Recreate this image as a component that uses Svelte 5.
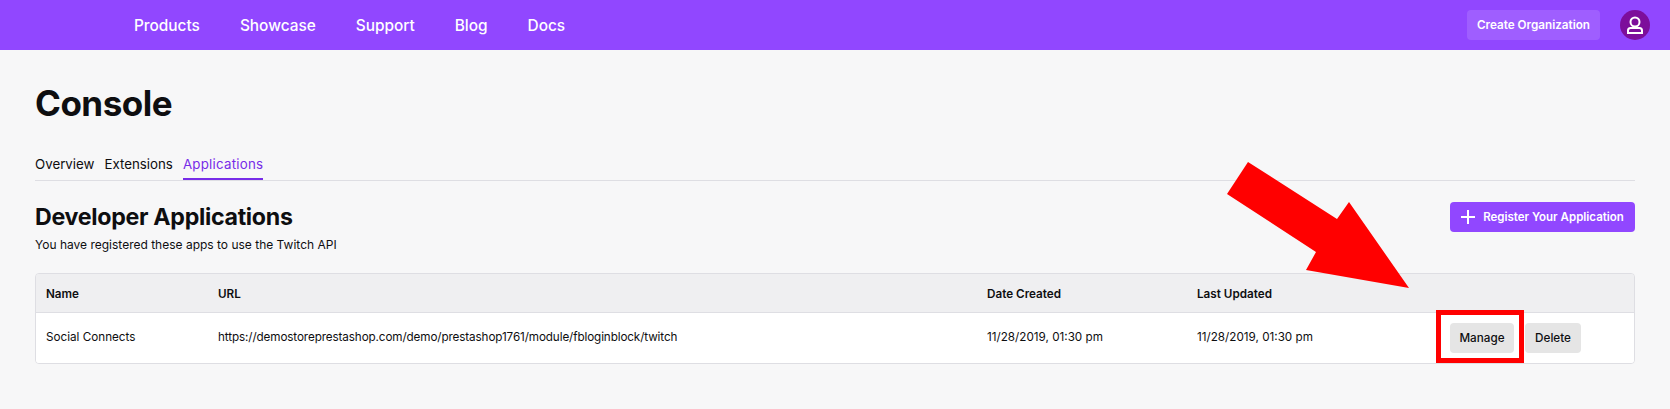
<script>
    const nav = ["Products", "Showcase", "Support", "Blog", "Docs"];
    const tabs = ["Overview", "Extensions", "Applications"];
    const columns = ["Name", "URL", "Date Created", "Last Updated", ""];
</script>

<header class="topbar">
    <nav class="links">
        {#each nav as item}
            <span>{item}</span>
        {/each}
    </nav>
    <div class="account">
        <button class="create">Create Organization</button>
        <div class="avatar">
            <svg width="20" height="20" viewBox="0 0 20 20" fill="none" stroke="#fff" stroke-width="2">
                <circle cx="10" cy="7" r="4.5" />
                <path d="M3 18v-2.5c0-1.4 1.100-2.500 2.500-2.500h9c1.400 0 2.500 1.100 2.500 2.500V18z" />
            </svg>
        </div>
    </div>
</header>

<main class="page">
    <h1>Console</h1>

    <div class="tabs">
        {#each tabs as tab, i}
            <span class="tab" class:active={i === 2}>{tab}</span>
        {/each}
    </div>

    <div class="section">
        <div>
            <h2>Developer Applications</h2>
            <p>You have registered these apps to use the Twitch API</p>
        </div>
        <button class="register">
            <svg width="14" height="14" viewBox="0 0 14 14" stroke="#fff" stroke-width="2">
                <path d="M7 0v14M0 7h14" />
            </svg>
            Register Your Application
        </button>
    </div>

    <div class="table">
        <div class="row head">
            {#each columns as col}
                <div class="cell">{col}</div>
            {/each}
        </div>
        <div class="row body">
            <div class="cell">Social Connects</div>
            <div class="cell url">https://demostoreprestashop.com/demo/prestashop1761/module/fbloginblock/twitch</div>
            <div class="cell">11/28/2019, 01:30 pm</div>
            <div class="cell">11/28/2019, 01:30 pm</div>
            <div class="cell actions">
                <button class="grey">Manage</button>
                <button class="grey">Delete</button>
            </div>
        </div>
    </div>
</main>

<!-- annotations drawn over the screenshot -->
<svg class="arrow" width="1670" height="409" viewBox="0 0 1670 409">
    <polygon points="1248,162 1337,219 1349,202 1409,288 1306,270 1316,252 1227,194" fill="#ff0000" />
</svg>
<div class="highlight"></div>

<style>
    :global(body) {
        margin: 0;
        background: #f7f7f8;
        color: #0e0e10;
        font-family: Inter, "Liberation Sans", sans-serif;
    }
    button {
        font-family: inherit;
        border: 0;
        border-radius: 4px;
        font-weight: 600;
        font-size: 11.7px;
        height: 30px;
        padding: 0;
    }
    .topbar {
        height: 50px;
        background: #9147ff;
        display: flex;
        align-items: center;
        justify-content: space-between;
        padding: 0 20px 0 134px;
    }
    .links {
        display: flex;
        gap: 40px;
        color: #fff;
        font-size: 15.4px;
        font-weight: 500;
    }
    .account {
        display: flex;
        align-items: center;
        gap: 20px;
    }
    .create {
        width: 133px;
        background: rgba(255, 255, 255, 0.13);
        color: #fff;
    }
    .avatar {
        width: 30px;
        height: 30px;
        border-radius: 50%;
        background: #7d0e9b;
        display: flex;
        align-items: center;
        justify-content: center;
    }
    .page {
        padding: 0 35px;
    }
    h1 {
        margin: 0;
        padding-top: 32px;
        font-size: 35px;
        line-height: 42px;
        font-weight: 700;
        letter-spacing: -0.5px;
    }
    .tabs {
        display: flex;
        gap: 10px;
        margin-top: 26px;
        height: 30px;
        border-bottom: 1px solid #dedee3;
        font-size: 13.3px;
    }
    .tab {
        line-height: 28px;
        height: 28px;
    }
    .tab.active {
        color: #772ce8;
        letter-spacing: 0.25px;
        border-bottom: 2px solid #772ce8;
    }
    .section {
        display: flex;
        justify-content: space-between;
        align-items: flex-start;
        margin-top: 21px;
    }
    h2 {
        margin: 0;
        font-size: 23.2px;
        line-height: 30px;
        font-weight: 700;
        letter-spacing: -0.3px;
    }
    .section p {
        margin: 5px 0 0;
        font-size: 12px;
        line-height: 16px;
    }
    .register {
        width: 185px;
        background: #9147ff;
        color: #fff;
        font-size: 11.5px;
        display: flex;
        align-items: center;
        justify-content: center;
        gap: 8px;
    }
    .table {
        margin-top: 20px;
        width: 1600px;
        box-sizing: border-box;
        border: 1px solid #dedee3;
        border-radius: 4px;
        overflow: hidden;
        font-size: 11.7px;
    }
    .row {
        display: grid;
        grid-template-columns: 172px 769px 210px 210px 1fr;
        align-items: center;
    }
    .head {
        height: 38px;
        background: #efeff1;
        border-bottom: 1px solid #dedee3;
        font-weight: 600;
    }
    .head .cell {
        padding-top: 2px;
    }
    .body {
        height: 50px;
        background: #fff;
    }
    .cell {
        padding-left: 10px;
    }
    .body .cell {
        padding-bottom: 2px;
    }
    .url {
        letter-spacing: -0.11px;
    }
    .cell.actions {
        padding: 0;
        display: flex;
        justify-content: center;
        gap: 11px;
    }
    .grey {
        background: #e5e5e5;
        color: #0e0e10;
        font-weight: 500;
    }
    .actions .grey:first-child {
        width: 64px;
    }
    .actions .grey:last-child {
        width: 56px;
    }
    .arrow {
        position: absolute;
        top: 0;
        left: 0;
        pointer-events: none;
    }
    .highlight {
        position: absolute;
        left: 1436px;
        top: 310px;
        width: 88px;
        height: 53px;
        box-sizing: border-box;
        border: 5px solid #ff0000;
    }
</style>
